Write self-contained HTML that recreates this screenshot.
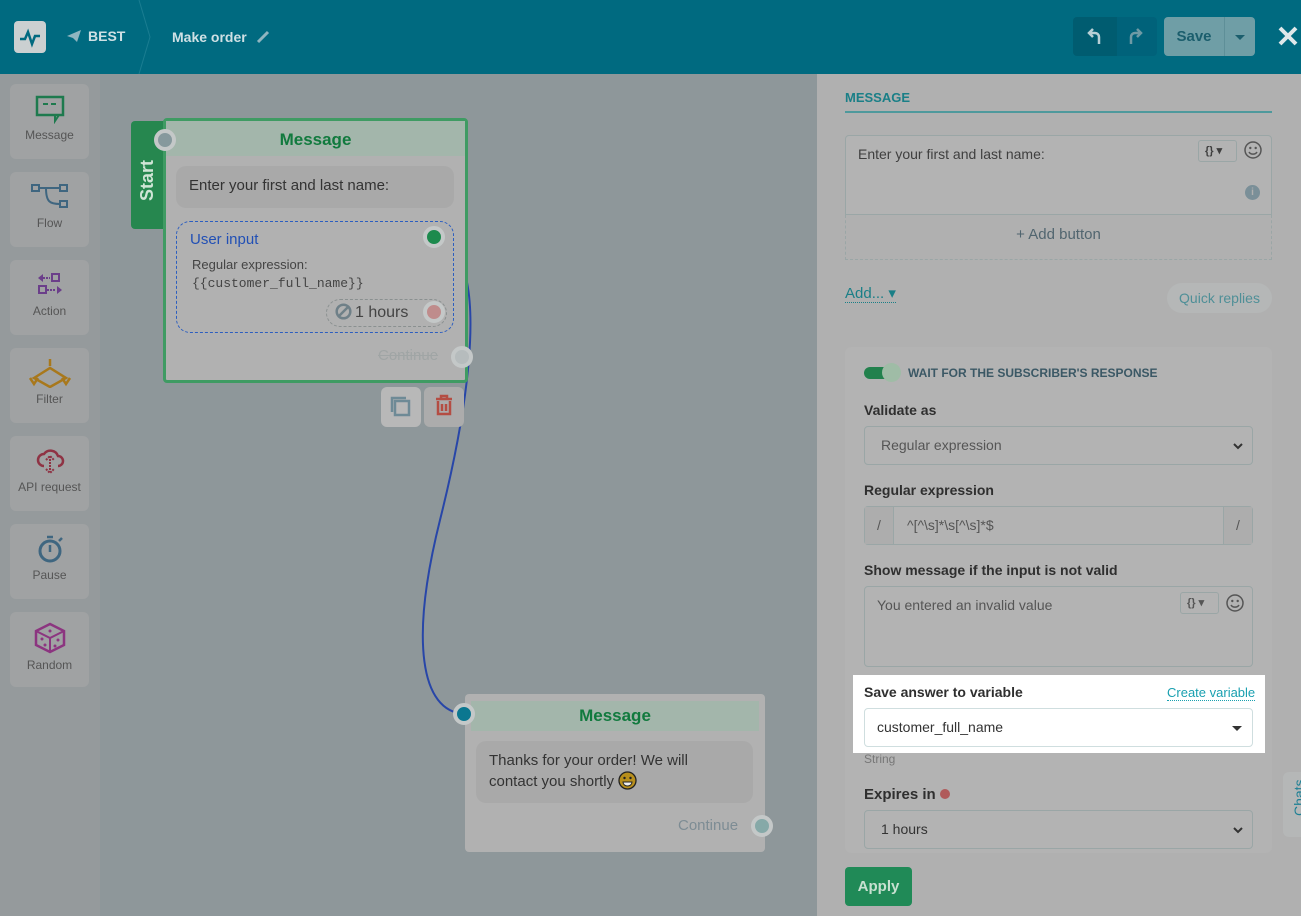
<!DOCTYPE html>
<html><head><meta charset="utf-8"><style>
*{box-sizing:border-box;margin:0;padding:0}
body{width:1301px;height:916px;overflow:hidden;font-family:"Liberation Sans",sans-serif;background:#8e979a;position:relative;color:#333}
.hdr{position:absolute;left:0;top:0;width:1301px;height:74px;background:#006a80}
.abs{position:absolute}
.side{position:absolute;left:0;top:74px;width:100px;height:842px;background:#959a9c}
.tile{position:absolute;left:10px;width:79px;height:75px;background:#a0a2a3;border-radius:6px;text-align:center;font-size:12px;color:#555}
.tile svg{display:block;margin:10px auto 4px}
.rp{position:absolute;left:817px;top:74px;width:484px;height:842px;background:#b0b0b0}
.lbl{position:absolute;font-size:14px;font-weight:bold;color:#2f2f2f}
.inp{position:absolute;border:1px solid #9aa6a6;border-radius:4px;background:#b3b3b3;font-size:14px;color:#555}
.node{position:absolute;background:#b1b1b1;border-radius:4px}
.dot{position:absolute;width:22px;height:22px;border-radius:50%;border:4px solid #c4c8c8}
.chev{position:absolute;right:8px;top:14px}
.smile{position:absolute;width:18px;height:18px}
</style></head><body>
<div class="hdr">
 <div class="abs" style="left:14px;top:21px;width:32px;height:32px;background:#cbd0d1;border-radius:4px"><svg width="32" height="32"><path d="M6 18h5l3-7 4 12 3-8h5" stroke="#006a80" stroke-width="2.5" fill="none"/></svg></div>
 <svg class="abs" style="left:66px;top:29px" width="16" height="14"><path d="M1 7L15 1 11 13 7 9z" fill="#8fb5c0"/></svg>
 <div class="abs" style="left:88px;top:28px;color:#cfe0e4;font-weight:bold;font-size:14px">BEST</div>
 <svg class="abs" style="left:135px;top:0" width="20" height="74"><path d="M4 0L15 37 4 74" stroke="#1a7d91" fill="none"/></svg>
 <div class="abs" style="left:172px;top:29px;color:#cfe0e4;font-weight:bold;font-size:14px">Make order</div>
 <svg class="abs" style="left:256px;top:30px" width="14" height="14"><path d="M2 12L12 2" stroke="#8fb5c0" stroke-width="3"/></svg>
 <div class="abs" style="left:1073px;top:17px;width:44px;height:39px;background:#005c70;border-radius:4px 0 0 4px"><svg width="44" height="39"><path d="M26 27v-7a4 4 0 00-4-4h-5M20 12l-4 4 4 4" fill="none" stroke="#b8cfd5" stroke-width="2.5"/></svg></div>
 <div class="abs" style="left:1117px;top:17px;width:40px;height:39px;background:#00627a;border-radius:0 4px 4px 0"><svg width="40" height="39"><path d="M14 27v-7a4 4 0 014-4h5M20 12l4 4-4 4" fill="none" stroke="#6e9aa5" stroke-width="2.5"/></svg></div>
 <div class="abs" style="left:1164px;top:17px;width:60px;height:39px;background:#6f9ea6;border-radius:4px 0 0 4px;color:#1b5e6d;text-align:center;line-height:39px;font-size:15px;font-weight:bold">Save</div>
 <div class="abs" style="left:1224px;top:17px;width:31px;height:39px;background:#6f9ea6;border-left:1px solid #5e8f98;border-radius:0 4px 4px 0"><div class="abs" style="left:10px;top:18px;border:5px solid transparent;border-top-color:#1b5e6d"></div></div>
 <svg class="abs" style="left:1278px;top:26px" width="20" height="20"><path d="M2 2L18 18M18 2L2 18" stroke="#dfe8ea" stroke-width="4"/></svg>
</div>
<div class="side">
 <div class="tile" style="top:10px"><svg width="30" height="30"><rect x="2" y="3" width="26" height="18" fill="none" stroke="#1e7a4e" stroke-width="2.5"/><path d="M8 10h5M16 10h5" stroke="#1e7a4e" stroke-width="2"/><path d="M20 21v6l4-6" fill="none" stroke="#1e7a4e" stroke-width="2"/></svg>Message</div>
 <div class="tile" style="top:98px"><svg width="40" height="30"><rect x="2" y="3" width="7" height="6" fill="none" stroke="#3f6680" stroke-width="2"/><rect x="30" y="3" width="7" height="6" fill="none" stroke="#3f6680" stroke-width="2"/><rect x="30" y="19" width="7" height="6" fill="none" stroke="#3f6680" stroke-width="2"/><path d="M9 6h21M16 6c0 14 4 16 14 16" fill="none" stroke="#3f6680" stroke-width="2"/></svg>Flow</div>
 <div class="tile" style="top:186px"><svg width="30" height="30"><rect x="17" y="4" width="7" height="7" fill="none" stroke="#6b3f8a" stroke-width="2"/><rect x="4" y="16" width="7" height="7" fill="none" stroke="#6b3f8a" stroke-width="2"/><path d="M3 8l5-4v8zM27 20l-5-4v8z" fill="#6b3f8a"/><path d="M8 8h7M12 20h8" stroke="#6b3f8a" stroke-width="2" stroke-dasharray="2 1"/></svg>Action</div>
 <div class="tile" style="top:274px"><svg width="44" height="30"><path d="M22 1v7M6 20l16-10 16 10-16 9z" fill="none" stroke="#a8781c" stroke-width="2.5"/><path d="M2 20l4 6 4-6M34 20l4 6 4-6" fill="none" stroke="#a8781c" stroke-width="2.5"/></svg>Filter</div>
 <div class="tile" style="top:362px"><svg width="30" height="30"><path d="M9 20a6 6 0 010-12 8 8 0 0114 2 5 5 0 010 10" fill="none" stroke="#8f3344" stroke-width="2.5"/><path d="M15 10v16M11 14l4-4 4 4M11 23l4 4 4-4" fill="none" stroke="#8f3344" stroke-width="2" stroke-dasharray="2 1"/></svg>API request</div>
 <div class="tile" style="top:450px"><svg width="30" height="30"><circle cx="15" cy="17" r="10" fill="none" stroke="#3f6680" stroke-width="3"/><path d="M15 11v7M12 3h6M24 7l3-3" stroke="#3f6680" stroke-width="2.5"/></svg>Pause</div>
 <div class="tile" style="top:538px"><svg width="34" height="32"><path d="M17 2l14 7v14l-14 7-14-7V9z" fill="none" stroke="#8c3580" stroke-width="2.5"/><path d="M3 9l14 7 14-7M17 16v14" fill="none" stroke="#8c3580" stroke-width="2"/><circle cx="17" cy="9" r="1.5" fill="#8c3580"/><circle cx="9" cy="17" r="1.5" fill="#8c3580"/><circle cx="12" cy="23" r="1.5" fill="#8c3580"/><circle cx="25" cy="18" r="1.5" fill="#8c3580"/><circle cx="22" cy="24" r="1.5" fill="#8c3580"/></svg>Random</div>
</div>
<svg class="abs" style="left:0;top:0" width="817" height="916"><path d="M440 240 C490 260 470 400 440 520 C410 640 420 712 465 714" stroke="#2846a8" stroke-width="2" fill="none"/></svg>
<!-- node 1 -->
<div class="abs" style="left:131px;top:121px;width:40px;height:108px;background:#26874f;border-radius:4px 0 0 4px"></div>
<div class="abs" style="left:137px;top:201px;color:#cfe5d6;font-weight:bold;font-size:18px;transform:rotate(-90deg);transform-origin:left top">Start</div>
<div class="node" style="left:163px;top:118px;width:305px;height:265px;border:3px solid #3f9b63"></div>
<div class="abs" style="left:166px;top:121px;width:299px;height:35px;background:#a3b6ab;text-align:center;color:#117a3e;font-weight:bold;font-size:17px;line-height:38px">Message</div>
<div class="dot" style="left:154px;top:129px;background:#86999d"></div>
<div class="abs" style="left:176px;top:166px;width:278px;height:42px;background:#a9a9a9;border-radius:10px;font-size:15px;padding:11px 13px;color:#333">Enter your first and last name:</div>
<div class="abs" style="left:176px;top:221px;width:278px;height:112px;border:1px dashed #2c5ec0;border-radius:14px"></div>
<div class="abs" style="left:190px;top:231px;color:#2250b5;font-size:15px">User input</div>
<div class="abs" style="left:192px;top:256px;font-size:13px;color:#444;line-height:18px">Regular expression:<br><span style="font-family:'Liberation Mono',monospace">{{customer_full_name}}</span></div>
<div class="dot" style="left:423px;top:226px;background:#1c8a4d;border-color:#c4c8c8"></div>
<div class="abs" style="left:326px;top:299px;width:121px;height:28px;border:1px dashed #8a9090;border-radius:14px;font-size:16px;color:#444;padding:3px 0 0 8px"><svg width="17" height="17" style="vertical-align:-3px;margin-right:3px"><circle cx="8.5" cy="8.5" r="6.8" fill="none" stroke="#6f8088" stroke-width="2.5"/><path d="M4 13L13 4" stroke="#6f8088" stroke-width="2.5"/></svg>1 hours</div>
<div class="dot" style="left:423px;top:301px;background:#bf8c8c"></div>
<div class="abs" style="left:378px;top:347px;color:#a0a5a5;font-size:15px;text-decoration:line-through">Continue</div>
<div class="dot" style="left:451px;top:346px;background:#b6bcbd"></div>
<div class="abs" style="left:381px;top:387px;width:40px;height:40px;background:#b8b8b8;border-radius:6px"><svg width="40" height="40"><rect x="14" y="14" width="14" height="14" fill="none" stroke="#6e8a96" stroke-width="2.5"/><path d="M11 25V11h14" fill="none" stroke="#6e8a96" stroke-width="2.5"/></svg></div>
<div class="abs" style="left:424px;top:387px;width:40px;height:40px;background:#acacac;border-radius:6px"><svg width="40" height="40"><path d="M12 12h16M17 12V9h6v3M14 14v13h12V14M18 17v7M22 17v7" fill="none" stroke="#b44d43" stroke-width="2.5"/></svg></div>
<!-- node 2 -->
<div class="node" style="left:465px;top:694px;width:300px;height:158px"></div>
<div class="abs" style="left:471px;top:701px;width:288px;height:30px;background:#a3b6ab;text-align:center;color:#117a3e;font-weight:bold;font-size:17px;line-height:30px">Message</div>
<div class="dot" style="left:453px;top:703px;background:#0b7790"></div>
<div class="abs" style="left:476px;top:741px;width:277px;height:62px;background:#a9a9a9;border-radius:10px;font-size:15px;padding:9px 13px;line-height:21px;color:#333">Thanks for your order! We will contact you shortly <svg width="19" height="19" style="vertical-align:-4px"><circle cx="9.5" cy="9.5" r="8.5" fill="#b88f1c" stroke="#222" stroke-width="1.3"/><circle cx="6.5" cy="7" r="1.2" fill="#222"/><circle cx="12.5" cy="7" r="1.2" fill="#222"/><path d="M5 11h9a4.5 4 0 01-9 0z" fill="#eee" stroke="#222"/></svg></div>
<div class="abs" style="left:678px;top:817px;color:#7d8c94;font-size:15px">Continue</div>
<div class="dot" style="left:751px;top:815px;background:#86a9a8"></div>
<!-- right panel -->
<div class="rp">
 <div class="abs" style="left:28px;top:16px;color:#1a7f87;font-weight:bold;font-size:13px">MESSAGE</div>
 <div class="abs" style="left:28px;top:37px;width:427px;height:2px;background:#4e999c"></div>
 <div class="inp" style="left:28px;top:61px;width:427px;height:80px;border-radius:4px 4px 0 0;color:#3f3f3f;padding:10px 12px">Enter your first and last name:
  <div class="abs" style="left:352px;top:4px;width:39px;height:22px;border:1px solid #9aa6a6;border-radius:3px;font-size:11px;font-weight:bold;padding:3px 6px">{} ▾</div>
  <svg class="smile" style="left:398px;top:5px" viewBox="0 0 18 18"><circle cx="9" cy="9" r="8" fill="none" stroke="#555" stroke-width="1.5"/><circle cx="6.3" cy="7" r="1.2" fill="#555"/><circle cx="11.7" cy="7" r="1.2" fill="#555"/><path d="M5 11a4.5 4 0 008 0" fill="none" stroke="#555" stroke-width="1.5"/></svg>
  <div class="abs" style="left:399px;top:49px;width:15px;height:15px;background:#7a8f98;border-radius:50%;color:#b0b0b0;font-size:10px;font-weight:bold;text-align:center;line-height:15px">i</div>
 </div>
 <div class="abs" style="left:28px;top:141px;width:427px;height:45px;border:1px dashed #9aa6a6;border-top:none;text-align:center;line-height:40px;color:#51656f;font-size:15px">+ Add button</div>
 <div class="abs" style="left:28px;top:210px;color:#1a7f87;font-size:15px;border-bottom:1px dotted #1a7f87">Add... ▾</div>
 <div class="abs" style="left:350px;top:209px;width:105px;height:30px;background:#b5b7b7;border-radius:15px;color:#4f8f97;font-size:14px;text-align:center;line-height:30px">Quick replies</div>
 <div class="abs" style="left:28px;top:273px;width:427px;height:506px;background:#b3b3b3;border-radius:6px"></div>
 <div class="abs" style="left:47px;top:293px;width:30px;height:12px;background:#22814d;border-radius:6px"></div>
 <div class="abs" style="left:65px;top:289px;width:19px;height:19px;background:#9fbca6;border-radius:50%"></div>
 <div class="abs" style="left:91px;top:292px;color:#3b5865;font-weight:bold;font-size:12px">WAIT FOR THE SUBSCRIBER'S RESPONSE</div>
 <div class="lbl" style="left:47px;top:328px">Validate as</div>
 <div class="inp" style="left:47px;top:352px;width:389px;height:39px;padding:10px 16px">Regular expression<svg class="chev" width="12" height="10"><path d="M2 3l4 4 4-4" fill="none" stroke="#333" stroke-width="2"/></svg></div>
 <div class="lbl" style="left:47px;top:408px">Regular expression</div>
 <div class="inp" style="left:47px;top:432px;width:389px;height:39px"><div class="abs" style="left:0;top:0;width:29px;height:37px;border-right:1px solid #9aa6a6;background:#adadad;text-align:center;line-height:37px">/</div><div class="abs" style="left:42px;top:10px">^[^\s]*\s[^\s]*$</div><div class="abs" style="right:0;top:0;width:29px;height:37px;border-left:1px solid #9aa6a6;background:#adadad;text-align:center;line-height:37px">/</div></div>
 <div class="lbl" style="left:47px;top:488px">Show message if the input is not valid</div>
 <div class="inp" style="left:47px;top:512px;width:389px;height:81px;padding:10px 12px">You entered an invalid value
  <div class="abs" style="left:315px;top:5px;width:39px;height:22px;border:1px solid #9aa6a6;border-radius:3px;font-size:11px;font-weight:bold;padding:3px 6px">{} ▾</div>
  <svg class="smile" style="left:361px;top:7px" viewBox="0 0 18 18"><circle cx="9" cy="9" r="8" fill="none" stroke="#555" stroke-width="1.5"/><circle cx="6.3" cy="7" r="1.2" fill="#555"/><circle cx="11.7" cy="7" r="1.2" fill="#555"/><path d="M5 11a4.5 4 0 008 0" fill="none" stroke="#555" stroke-width="1.5"/></svg></div>
 <div class="abs" style="left:36px;top:601px;width:412px;height:78px;background:#fff"></div>
 <div class="lbl" style="left:47px;top:610px">Save answer to variable</div>
 <div class="abs" style="left:350px;top:611px;color:#1aa0b0;font-size:13px;border-bottom:1px dotted #1aa0b0">Create variable</div>
 <div class="abs" style="left:47px;top:634px;width:389px;height:39px;border:1px solid #cfdedf;border-radius:4px;padding:10px 12px;font-size:14px;color:#333">customer_full_name<div class="abs" style="right:10px;top:17px;border:5px solid transparent;border-top-color:#333"></div></div>
 <div class="abs" style="left:47px;top:678px;color:#777;font-size:12px">String</div>
 <div class="lbl" style="left:47px;top:712px;font-size:15px">Expires in <span style="display:inline-block;width:10px;height:10px;background:#b05a5a;border-radius:50%"></span></div>
 <div class="inp" style="left:47px;top:736px;width:389px;height:39px;padding:10px 16px;color:#333">1 hours<svg class="chev" width="12" height="10"><path d="M2 3l4 4 4-4" fill="none" stroke="#333" stroke-width="2"/></svg></div>
 <div class="abs" style="left:28px;top:793px;width:67px;height:39px;background:#208a57;border-radius:4px;color:#c8e0d1;font-weight:bold;font-size:15px;text-align:center;line-height:39px">Apply</div>
 <div class="abs" style="left:466px;top:698px;width:30px;height:65px;background:#b5b7b7;border-radius:6px 0 0 6px"><div style="transform:rotate(-90deg);color:#1c7f94;font-size:14px;margin-top:22px;margin-left:2px">Chats</div></div>
</div>
</body></html>
